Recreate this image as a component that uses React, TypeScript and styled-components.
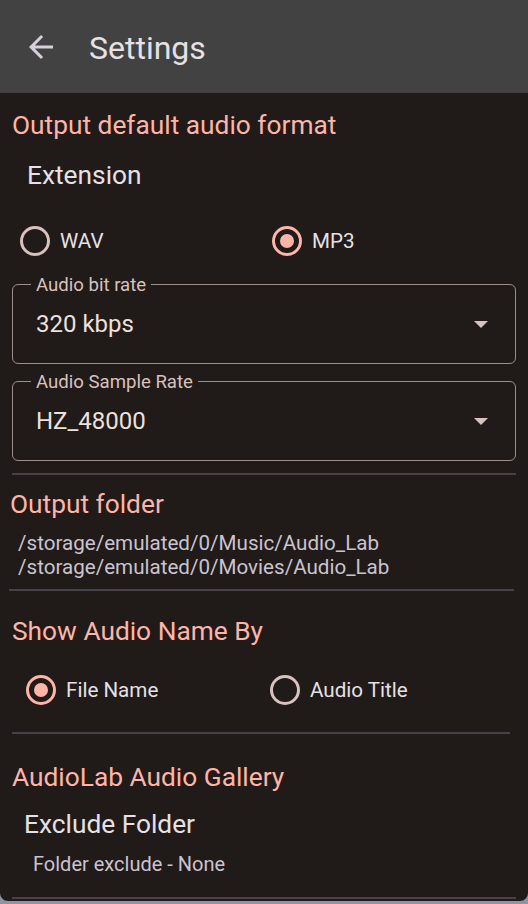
import React, { useState } from 'react';
import styled, { createGlobalStyle } from 'styled-components';

// Settings screen – dark Material 3 look

const GlobalStyle = createGlobalStyle`
  html, body {
    margin: 0;
    padding: 0;
    background: #8d95a3;
    font-family: Roboto, "Noto Sans", "Liberation Sans", sans-serif;
  }
  * { box-sizing: border-box; }
`;

const Screen = styled.div`
  width: 528px;
  height: 901px;
  background: #201a19;
  border-radius: 0 0 8px 8px;
  overflow: hidden;
`;

const AppBar = styled.header`
  display: flex;
  align-items: center;
  height: 93px;
  padding-left: 23px;
  gap: 30px;
  background: #424242;
  color: #e6e1e5;
`;

const BackButton = styled.button`
  display: flex;
  padding: 0;
  border: 0;
  background: transparent;
  color: #d6cfdc;
  cursor: pointer;
`;

const Title = styled.h1`
  margin: 3px 0 0;
  font-size: 32px;
  font-weight: 400;
  letter-spacing: 0;
`;

const Content = styled.main`
  display: flex;
  flex-direction: column;
  padding: 0 12px;
`;

const SectionTitle = styled.h2<{ $top: number; $inset?: number }>`
  margin: ${({ $top }) => $top}px 0 0 ${({ $inset = 0 }) => $inset}px;
  font-size: 26.3px;
  line-height: 32px;
  font-weight: 400;
  color: #ffb4a8;
`;

const ItemTitle = styled.div<{ $top: number; $inset: number }>`
  margin: ${({ $top }) => $top}px 0 0 ${({ $inset }) => $inset}px;
  font-size: 26.3px;
  line-height: 32px;
  color: #e6e1e5;
`;

const BodyText = styled.div<{ $top: number; $inset: number; $size?: number }>`
  margin: ${({ $top }) => $top}px 0 0 ${({ $inset }) => $inset}px;
  font-size: ${({ $size = 20 }) => $size}px;
  line-height: 24px;
  color: #cac4d0;
`;

const RadioGroup = styled.div<{ $top: number; $columns: string }>`
  display: grid;
  grid-template-columns: ${({ $columns }) => $columns};
  align-items: center;
  height: 48px;
  margin-top: ${({ $top }) => $top}px;
`;

const RadioOption = styled.label<{ $inset: number }>`
  display: flex;
  align-items: center;
  gap: 10px;
  padding-left: ${({ $inset }) => $inset}px;
  font-size: 20.6px;
  color: #e6e1e5;
  cursor: pointer;
`;

const RadioCircle = styled.span<{ $checked: boolean }>`
  display: flex;
  align-items: center;
  justify-content: center;
  width: 30px;
  height: 30px;
  border-radius: 50%;
  border: 3px solid ${({ $checked }) => ($checked ? '#ffb4a8' : '#d8c2be')};

  &::after {
    content: '';
    width: 14px;
    height: 14px;
    border-radius: 50%;
    background: ${({ $checked }) => ($checked ? '#ffb4a8' : 'transparent')};
  }
`;

const SelectField = styled.div<{ $top: number }>`
  position: relative;
  display: flex;
  align-items: center;
  justify-content: space-between;
  height: 80px;
  margin-top: ${({ $top }) => $top}px;
  padding: 0 27px 0 23px;
  border: 1.5px solid #a08c89;
  border-radius: 6px;
`;

const SelectLabel = styled.span`
  position: absolute;
  top: -10px;
  left: 18px;
  padding: 0 5px;
  background: #201a19;
  font-size: 18.6px;
  line-height: 20px;
  color: #d8c2be;
`;

const SelectValue = styled.span`
  font-size: 24px;
  color: #ede0dd;
`;

const Caret = styled.span`
  width: 0;
  height: 0;
  border-left: 7px solid transparent;
  border-right: 7px solid transparent;
  border-top: 7px solid #d8c2be;
`;

const Divider = styled.hr<{ $top: number; $left?: number; $right?: number }>`
  height: 2px;
  margin: ${({ $top }) => $top}px ${({ $right = 0 }) => $right}px 0
    ${({ $left = 0 }) => $left}px;
  border: 0;
  background: #46424c;
`;

const ArrowBack = () => (
  <svg width="36" height="36" viewBox="0 0 24 24" fill="currentColor">
    <path d="M20 11H7.83l5.59-5.59L12 4l-8 8 8 8 1.41-1.41L7.83 13H20v-2z" />
  </svg>
);

interface RadioProps {
  label: string;
  checked: boolean;
  inset: number;
  onSelect: () => void;
}

const Radio: React.FC<RadioProps> = ({ label, checked, inset, onSelect }) => (
  <RadioOption $inset={inset} onClick={onSelect}>
    <RadioCircle $checked={checked} />
    {label}
  </RadioOption>
);

export default function App() {
  const [ext, setExt] = useState<'WAV' | 'MP3'>('MP3');
  const [nameBy, setNameBy] = useState<'file' | 'title'>('file');

  return (
    <>
      <GlobalStyle />
      <Screen>
        <AppBar>
          <BackButton aria-label="Back">
            <ArrowBack />
          </BackButton>
          <Title>Settings</Title>
        </AppBar>

        <Content>
          <SectionTitle $top={16}>Output default audio format</SectionTitle>
          <ItemTitle $top={18} $inset={15}>Extension</ItemTitle>

          <RadioGroup $top={26} $columns="252px 252px">
            <Radio label="WAV" inset={8} checked={ext === 'WAV'} onSelect={() => setExt('WAV')} />
            <Radio label="MP3" inset={8} checked={ext === 'MP3'} onSelect={() => setExt('MP3')} />
          </RadioGroup>

          <SelectField $top={19}>
            <SelectLabel>Audio bit rate</SelectLabel>
            <SelectValue>320 kbps</SelectValue>
            <Caret />
          </SelectField>

          <SelectField $top={17}>
            <SelectLabel>Audio Sample Rate</SelectLabel>
            <SelectValue>HZ_48000</SelectValue>
            <Caret />
          </SelectField>

          <Divider $top={12} />

          <SectionTitle $top={13} $inset={-2}>Output folder</SectionTitle>
          <BodyText $top={11} $inset={6} $size={20.6}>
            /storage/emulated/0/Music/Audio_Lab
            <br />
            /storage/emulated/0/Movies/Audio_Lab
          </BodyText>

          <Divider $top={10} $left={-3} $right={2} />

          <SectionTitle $top={24}>Show Audio Name By</SectionTitle>
          <RadioGroup $top={19} $columns="244px 1fr">
            <Radio label="File Name" inset={14} checked={nameBy === 'file'} onSelect={() => setNameBy('file')} />
            <Radio label="Audio Title" inset={14} checked={nameBy === 'title'} onSelect={() => setNameBy('title')} />
          </RadioGroup>

          <Divider $top={18} $right={6} />

          <SectionTitle $top={27}>AudioLab Audio Gallery</SectionTitle>
          <ItemTitle $top={15} $inset={12}>Exclude Folder</ItemTitle>
          <BodyText $top={12} $inset={21}>Folder exclude - None</BodyText>

          <Divider $top={21} />
        </Content>
      </Screen>
    </>
  );
}
